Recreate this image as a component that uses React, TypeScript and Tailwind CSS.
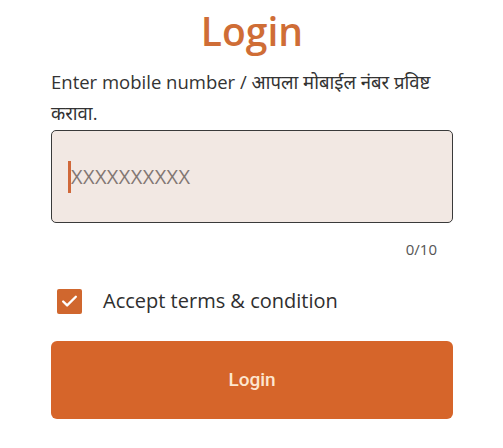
import { Check } from 'lucide-react';

export default function App() {
  return (
    <div
      className="min-h-[448px] w-full bg-white pl-[51px] pr-[50px] pt-[6px]"
      style={{ fontFamily: '"Open Sans", "Noto Sans", sans-serif' }}
    >
      <h1 className="text-center text-[39px] font-semibold leading-[50px] text-[#cf6d36]">Login</h1>

      <p className="mt-[10px] text-[18.5px] leading-[31px] text-[#333333]">
        Enter mobile number / आपला मोबाईल नंबर प्रविष्ट करावा.
      </p>

      <div className="mt-[2px] flex h-[93px] items-center rounded-[5px] border-[1.5px] border-[#3a3a3a] bg-[#f2e8e3] pl-[16px]">
        <span className="h-[32px] w-[3px] bg-[#d0683a]" />
        <span className="text-[20px] tracking-[0.4px] text-[#827773]">XXXXXXXXXX</span>
      </div>

      <div className="mt-[16px] pr-[16px] text-right text-[15px] leading-[20px] text-[#555555]">0/10</div>

      <label className="mt-[28px] flex items-center pl-[6px]">
        <span className="flex h-[25px] w-[25px] items-center justify-center rounded-[2px] bg-[#d0672e]">
          <Check className="h-[19px] w-[19px] text-white" strokeWidth={3} />
        </span>
        <span className="ml-[21px] text-[20px] leading-[28px] text-[#2f2f2f]">Accept terms &amp; condition</span>
      </label>

      <button
        className="mt-[26px] flex h-[78px] w-full items-center justify-center rounded-[6px] bg-[#d6652a] text-[19px] font-medium text-[#fde6cf]"
        style={{ fontFamily: 'Roboto, sans-serif' }}
      >
        Login
      </button>
    </div>
  );
}
